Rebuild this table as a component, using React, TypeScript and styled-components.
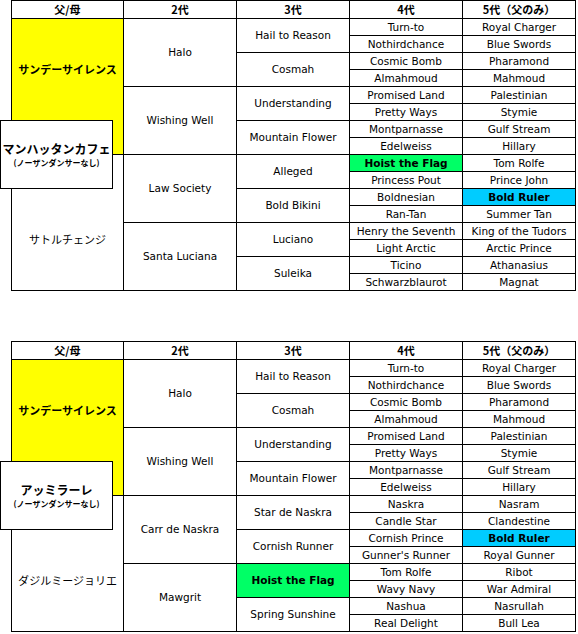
import React, { FC } from "react";
import styled, { createGlobalStyle } from "styled-components";

const GlobalStyle = createGlobalStyle`
  body {
    margin: 0;
    background: #fff;
    font-family: "DejaVu Sans", "Noto Sans CJK JP", sans-serif;
    color: #000;
  }
`;

const Page = styled.div`
  display: flex;
  flex-direction: column;
  gap: 50px;
`;

const Section = styled.div`
  position: relative;
  padding-left: 11px;
`;

const Grid = styled.div`
  display: grid;
  width: max-content;
  grid-template-columns: 111px repeat(4, 112px);
  grid-template-rows: 17px repeat(16, 16px);
  gap: 1px;
  padding: 1px;
  background: #000;
`;

const Head = styled.div<{ $col: number }>`
  grid-column: ${(p) => p.$col};
  grid-row: 1;
  background: #fff;
  display: flex;
  align-items: center;
  justify-content: center;
  font-family: "Noto Sans CJK JP", "DejaVu Sans", sans-serif;
  font-weight: bold;
  font-size: 11px;
  padding-bottom: 1px;
`;

type Tone = "yellow" | "green" | "blue" | undefined;

const tones: Record<string, string> = {
  yellow: "#ffff00",
  green: "#00ff66",
  blue: "#00ccff",
};

const Cell = styled.div<{ $col: number; $row: number; $span: number; $tone?: Tone; $bold?: boolean; $shift?: number }>`
  grid-column: ${(p) => p.$col};
  grid-row: ${(p) => p.$row} / span ${(p) => p.$span};
  background: ${(p) => (p.$tone ? tones[p.$tone] : "#fff")};
  display: flex;
  align-items: center;
  justify-content: center;
  font-size: 10.5px;
  line-height: 14px;
  font-weight: ${(p) => (p.$bold ? "bold" : "normal")};
  white-space: nowrap;
  padding-top: ${(p) => (p.$shift && p.$shift > 0 ? p.$shift * 2 : 0)}px;
  padding-bottom: ${(p) => (p.$shift && p.$shift < 0 ? -p.$shift * 2 + 1 : 1)}px;
`;

const JpName = styled.span<{ $bold?: boolean }>`
  font-family: "Noto Sans CJK JP", sans-serif;
  font-size: 11px;
  font-weight: ${(p) => (p.$bold ? "bold" : "normal")};
`;

const Tag = styled.div`
  position: absolute;
  left: 0;
  top: 120px;
  width: 113px;
  height: 69px;
  box-sizing: border-box;
  border: 1px solid #000;
  background: #fff;
  display: flex;
  flex-direction: column;
  align-items: center;
  justify-content: center;
  gap: 2px;
  font-family: "Noto Sans CJK JP", sans-serif;
  font-weight: bold;
`;

const TagName = styled.div`
  font-size: 12px;
  line-height: 14px;
`;

const TagNote = styled.div`
  font-size: 8px;
  line-height: 10px;
`;

type Horse = { name: string; tone?: Tone; bold?: boolean };

type Pedigree = {
  tag: string;
  gens: Horse[][];
};

const h = (name: string, tone?: Tone): Horse => ({ name, tone, bold: !!tone });

const sharedTop4 = ["Turn-to", "Nothirdchance", "Cosmic Bomb", "Almahmoud", "Promised Land", "Pretty Ways", "Montparnasse", "Edelweiss"];
const sharedTop5 = ["Royal Charger", "Blue Swords", "Pharamond", "Mahmoud", "Palestinian", "Stymie", "Gulf Stream", "Hillary"];

const pedigrees: Pedigree[] = [
  {
    tag: "マンハッタンカフェ",
    gens: [
      [h("サンデーサイレンス", "yellow"), h("サトルチェンジ")],
      ["Halo", "Wishing Well", "Law Society", "Santa Luciana"].map((n) => h(n)),
      ["Hail to Reason", "Cosmah", "Understanding", "Mountain Flower", "Alleged", "Bold Bikini", "Luciano", "Suleika"].map((n) => h(n)),
      [
        ...sharedTop4.map((n) => h(n)),
        h("Hoist the Flag", "green"),
        h("Princess Pout"),
        h("Boldnesian"),
        h("Ran-Tan"),
        h("Henry the Seventh"),
        h("Light Arctic"),
        h("Ticino"),
        h("Schwarzblaurot"),
      ],
      [
        ...sharedTop5.map((n) => h(n)),
        h("Tom Rolfe"),
        h("Prince John"),
        h("Bold Ruler", "blue"),
        h("Summer Tan"),
        h("King of the Tudors"),
        h("Arctic Prince"),
        h("Athanasius"),
        h("Magnat"),
      ],
    ],
  },
  {
    tag: "アッミラーレ",
    gens: [
      [h("サンデーサイレンス", "yellow"), h("ダジルミージョリエ")],
      ["Halo", "Wishing Well", "Carr de Naskra", "Mawgrit"].map((n) => h(n)),
      [
        h("Hail to Reason"),
        h("Cosmah"),
        h("Understanding"),
        h("Mountain Flower"),
        h("Star de Naskra"),
        h("Cornish Runner"),
        h("Hoist the Flag", "green"),
        h("Spring Sunshine"),
      ],
      [
        ...sharedTop4.map((n) => h(n)),
        h("Naskra"),
        h("Candle Star"),
        h("Cornish Prince"),
        h("Gunner's Runner"),
        h("Tom Rolfe"),
        h("Wavy Navy"),
        h("Nashua"),
        h("Real Delight"),
      ],
      [
        ...sharedTop5.map((n) => h(n)),
        h("Nasram"),
        h("Clandestine"),
        h("Bold Ruler", "blue"),
        h("Royal Gunner"),
        h("Ribot"),
        h("War Admiral"),
        h("Nasrullah"),
        h("Bull Lea"),
      ],
    ],
  },
];

const headers = ["父/母", "2代", "3代", "4代", "5代（父のみ）"];

const Table: FC<{ data: Pedigree }> = ({ data }) => (
  <Section>
    <Grid>
      {headers.map((t, i) => (
        <Head key={t} $col={i + 1}>
          {t}
        </Head>
      ))}
      {data.gens.map((gen, g) => {
        const span = 16 / gen.length;
        return gen.map((horse, i) => (
          <Cell
            key={`${g}-${i}`}
            $col={g + 1}
            $row={2 + i * span}
            $span={span}
            $tone={horse.tone}
            $bold={horse.bold}
            $shift={g === 0 ? (i === 0 ? -17 : 17) : 0}
          >
            {g === 0 ? <JpName $bold={horse.bold}>{horse.name}</JpName> : horse.name}
          </Cell>
        ));
      })}
    </Grid>
    <Tag>
      <TagName>{data.tag}</TagName>
      <TagNote>(ノーザンダンサーなし)</TagNote>
    </Tag>
  </Section>
);

const App: FC = () => (
  <>
    <GlobalStyle />
    <Page>
      {pedigrees.map((p) => (
        <Table key={p.tag} data={p} />
      ))}
    </Page>
  </>
);

export default App;
